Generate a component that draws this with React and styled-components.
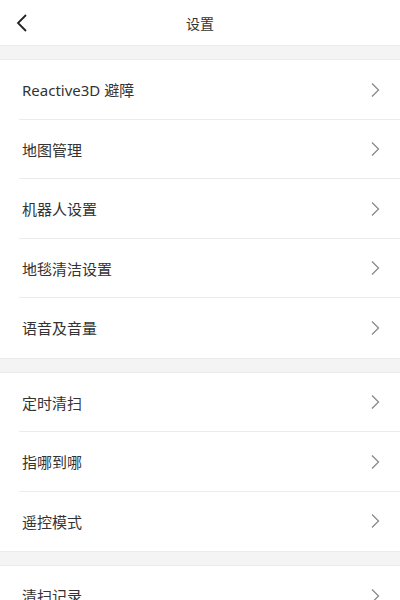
import React from "react";
import styled, { createGlobalStyle } from "styled-components";

const Global = createGlobalStyle`
  html, body { margin: 0; padding: 0; background: #fff; }
  body { font-family: "Noto Sans", "Noto Sans CJK SC", sans-serif; color: #333; }
`;

const Page = styled.div`
  width: 400px;
  height: 600px;
  overflow: hidden;
  background: #fff;
`;

const Header = styled.div`
  height: 45px;
  display: flex;
  align-items: center;
  justify-content: center;
  position: relative;
  background: #fff;
`;

const Back = styled.div`
  position: absolute;
  left: 14px;
  top: 13px;
  width: 18px;
  height: 20px;
  display: flex;
`;

const Title = styled.div`
  font-size: 14px;
  color: #333;
  font-family: "Noto Sans CJK SC", sans-serif;
`;

const Band = styled.div`
  height: 13px;
  background: #f4f4f4;
  border-top: 1px solid #ebebeb;
  border-bottom: 1px solid #ebebeb;
`;

const Section = styled.div`
  background: #fff;
`;

const Row = styled.div`
  height: 59.5px;
  display: flex;
  align-items: center;
  padding-left: 22px;
  padding-right: 20px;
  position: relative;
  &:not(:last-child)::after {
    content: "";
    position: absolute;
    left: 19px;
    right: 0;
    bottom: 0;
    height: 1px;
    background: #ececec;
  }
`;

const Label = styled.div`
  flex: 1;
  font-size: 15px;
  color: #333;
  font-family: "Noto Sans", "Noto Sans CJK SC", sans-serif;
`;

const Chevron = () => (
  <svg width="10" height="16" viewBox="0 0 10 16">
    <path d="M2 1.5 L8.5 8 L2 14.5" fill="none" stroke="#8a8a8a" strokeWidth="1.3" />
  </svg>
);

const sections = [
  ["Reactive3D 避障", "地图管理", "机器人设置", "地毯清洁设置", "语音及音量"],
  ["定时清扫", "指哪到哪", "遥控模式"],
  ["清扫记录"],
];

export default function App() {
  return (
    <Page>
      <Global />
      <Header>
        <Back>
          <svg width="18" height="20" viewBox="0 0 18 20">
            <path d="M12 2 L4 10 L12 18" fill="none" stroke="#222" strokeWidth="1.8" />
          </svg>
        </Back>
        <Title>设置</Title>
      </Header>
      {sections.map((s, i) => (
        <React.Fragment key={i}>
          <Band />
          <Section>
            {s.map((t) => (
              <Row key={t}>
                <Label>{t}</Label>
                <Chevron />
              </Row>
            ))}
          </Section>
        </React.Fragment>
      ))}
    </Page>
  );
}
